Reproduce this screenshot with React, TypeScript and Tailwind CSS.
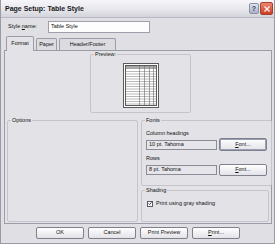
export default function App() {
  const btn =
    "h-[12px] w-[48px] flex items-center justify-center rounded-[2px] border border-[#80808c] bg-gradient-to-b from-[#ffffff] to-[#e2e2e8] text-[5.5px] text-[#111]";

  return (
    <div className="w-[275px] h-[244px] bg-[#e0dfe3] border-x border-b border-[#9a9aa6] overflow-hidden font-['Liberation_Sans',sans-serif] text-[5.5px] text-[#111] leading-none">
      {/* title bar */}
      <div className="h-[18px] flex items-center pl-[4px] pr-[1px] bg-gradient-to-b from-[#f6f6fa] via-[#e9e9ee] to-[#d3d3db] border-b border-[#b8b8c2]">
        <span className="text-[7px] font-bold text-[#1a1a1a]">Page Setup: Table Style</span>
        <div className="ml-auto flex items-center gap-[1px]">
          <div className="w-[10px] h-[11px] rounded-[2px] border border-[#8a92a8] bg-gradient-to-b from-[#dfe4ee] to-[#aab2c6] flex items-center justify-center text-[7px] font-bold text-[#3a3f55]">
            ?
          </div>
          <div className="w-[13px] h-[13px] rounded-[2px] border border-[#a4402e] bg-gradient-to-b from-[#ec8672] to-[#cc3a24] flex items-center justify-center">
            <svg width="8" height="8" viewBox="0 0 8 8">
              <path d="M1.5 1.5 L6.5 6.5 M6.5 1.5 L1.5 6.5" stroke="#fff4f0" strokeWidth="1.3" />
            </svg>
          </div>
        </div>
      </div>

      <div className="pl-[3px] pr-[2px]">
        {/* style name */}
        <div className="mt-[3px] flex items-center h-[12px]">
          <span className="w-[44px] pl-[4px]">
            Style <span className="underline">n</span>ame:
          </span>
          <div className="w-[102px] h-[12px] border border-[#a0a0ac] bg-[#fdfdfd] flex items-center pl-[2px]">
            Table Style
          </div>
        </div>

        {/* tabs */}
        <div className="mt-[3px] h-[14px] flex items-end pl-[2px] gap-[2px]">
          <div className="relative z-10 -mb-[1px] h-[15px] w-[28px] flex items-center justify-center border-x border-t border-[#9c9ca8] rounded-t-[2px] bg-[#e3e3e7]">
            Format
          </div>
          <div className="h-[12px] w-[21px] flex items-center justify-center border-x border-t border-[#9c9ca8] rounded-t-[2px] bg-[#dcdce0]">
            Paper
          </div>
          <div className="h-[12px] w-[57px] flex items-center justify-center border-x border-t border-[#9c9ca8] rounded-t-[2px] bg-[#dcdce0]">
            Header/Footer
          </div>
        </div>

        {/* panel */}
        <div className="h-[174px] border border-[#9c9ca8] bg-[#e3e3e7] pt-[1px] px-[2px]">
          <fieldset className="ml-[83px] w-[101px] h-[61px] border border-[#c4c4ca] rounded-[2px]">
            <legend className="ml-[3px] px-[1px]">Preview:</legend>
            <div className="flex justify-center mt-[5px]">
              <svg width="36" height="45" viewBox="0 0 36 45">
                <rect x="0.5" y="0.5" width="35" height="44" fill="#fff" stroke="#5a5a5a" />
                <rect x="2.5" y="2.5" width="31" height="40" fill="#fff" stroke="#5a5a5a" />
                <rect x="3" y="3" width="30" height="3" fill="#a8a8a8" />
                {[8.5, 11, 13.5, 16, 18.5, 21, 23.5, 26, 28.5, 31, 33.5, 36, 38.5, 41].map((y) => (
                  <line key={y} x1="3" x2="33" y1={y} y2={y} stroke="#8a8a8a" strokeWidth="0.6" />
                ))}
                {[16.5, 21.5, 26.5, 30.5].map((x) => (
                  <line key={x} x1={x} x2={x} y1="3" y2="42" stroke="#6a6a6a" strokeWidth="0.6" />
                ))}
              </svg>
            </div>
          </fieldset>

          <div className="mt-[5px] flex gap-[3px]">
            <fieldset className="w-[131px] h-[104px] border border-[#c4c4ca] rounded-[2px]">
              <legend className="ml-[3px] px-[1px]">Options</legend>
            </fieldset>

            <div className="w-[128px] flex flex-col gap-[2px]">
              <fieldset className="h-[68px] border border-[#c4c4ca] rounded-[2px] px-[4px]">
                <legend className="ml-[-1px] px-[1px]">Fonts</legend>
                <div className="mt-[7px]">Column headings</div>
                <div className="mt-[2px] flex items-center gap-[2px]">
                  <div className="w-[71px] h-[10px] border border-[#8c8c98] bg-[#e6e6ea] flex items-center pl-[2px]">
                    10 pt. Tahoma
                  </div>
                  <div className={btn + " w-[44px] h-[13px] border-[#3c3c48] ring-1 ring-inset ring-[#9aa0b4]"}>
                    <span className="underline">F</span>ont...
                  </div>
                </div>
                <div className="mt-[5px]">Rows</div>
                <div className="mt-[2px] flex items-center gap-[2px]">
                  <div className="w-[71px] h-[10px] border border-[#8c8c98] bg-[#e6e6ea] flex items-center pl-[2px]">
                    8 pt. Tahoma
                  </div>
                  <div className={btn + " w-[44px] h-[12px]"}>
                    <span className="underline">F</span>ont...
                  </div>
                </div>
              </fieldset>

              <fieldset className="h-[34px] border border-[#c4c4ca] rounded-[2px] px-[5px]">
                <legend className="ml-[-2px] px-[1px]">Shading</legend>
                <div className="mt-[7px] flex items-center gap-[3px]">
                  <div className="w-[6px] h-[6px] border border-[#5a5a66] bg-white flex items-center justify-center">
                    <svg width="5" height="5" viewBox="0 0 5 5">
                      <path d="M0.6 2.4 L2 3.8 L4.4 1" stroke="#222" strokeWidth="1.1" fill="none" />
                    </svg>
                  </div>
                  <span>Print using gray shading</span>
                </div>
              </fieldset>
            </div>
          </div>
        </div>

        {/* buttons */}
        <div className="mt-[3px] pl-[32px] flex gap-[4px]">
          <div className={btn + " border-[#3c3c48]"}>OK</div>
          <div className={btn}>Cancel</div>
          <div className={btn}>Print Preview</div>
          <div className={btn}>
            <span className="underline">P</span>rint...
          </div>
        </div>
      </div>
    </div>
  );
}
